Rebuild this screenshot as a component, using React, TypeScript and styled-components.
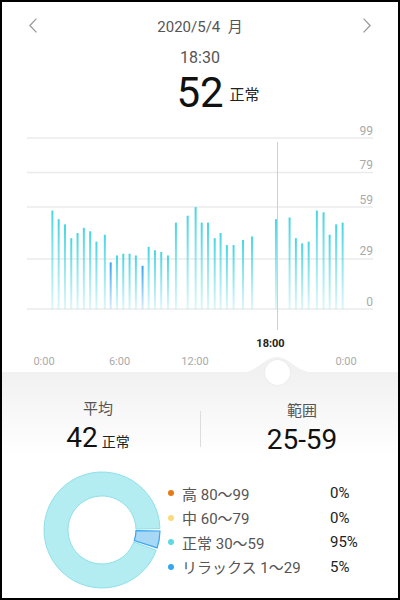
import { Fragment } from "react";
import styled, { createGlobalStyle } from "styled-components";

const GlobalStyle = createGlobalStyle`
  html, body {
    margin: 0;
    padding: 0;
    background: #fff;
  }
  body {
    font-family: Roboto, "Noto Sans CJK JP", sans-serif;
  }
`;

const Screen = styled.div`
  width: 400px;
  height: 600px;
  box-sizing: border-box;
  border: 2px solid #000;
  display: flex;
  flex-direction: column;
  overflow: hidden;
  background: #fff;
`;

const Header = styled.div`
  height: 46px;
  display: flex;
  align-items: center;
  justify-content: space-between;
  padding: 0 27px;
`;

const DateText = styled.div`
  font-size: 15px;
  color: #555;
`;

const NavButton = styled.button`
  border: 0;
  padding: 0;
  background: none;
  display: flex;
  cursor: pointer;
`;

const TimeText = styled.div`
  text-align: center;
  font-size: 16px;
  line-height: 20px;
  color: #555;
`;

const ReadingRow = styled.div`
  margin-top: 3px;
  height: 44px;
  display: grid;
  grid-template-columns: 1fr auto 1fr;
  align-items: baseline;
`;

const BigValue = styled.span`
  font-size: 42px;
  line-height: 44px;
  color: #111;
`;

const Unit = styled.span`
  font-size: 15px;
  line-height: 20px;
  color: #222;
  justify-self: start;
  align-self: center;
  margin: 4px 0 0 6px;
`;

const ChartSvg = styled.svg`
  display: block;
  width: 396px;
  height: 221px;
`;

const AxisRow = styled.div`
  height: 36px;
  display: grid;
  grid-template-columns: repeat(5, 75.5px);
  padding-left: 4.25px;
`;

const AxisLabel = styled.span<{ $active?: boolean }>`
  text-align: center;
  font-size: 11px;
  line-height: 14px;
  color: ${({ $active }) => ($active ? "#222" : "#aaa")};
  font-weight: ${({ $active }) => ($active ? 700 : 400)};
  align-self: ${({ $active }) => ($active ? "start" : "end")};
  padding-top: ${({ $active }) => ($active ? "1px" : "0")};
  margin-bottom: ${({ $active }) => ($active ? "0" : "3px")};
`;

const BottomPanel = styled.div`
  position: relative;
  flex: 1;
  background: linear-gradient(#f1f1f1 0, #fff 85px);
`;

const Bump = styled.svg`
  position: absolute;
  left: 238px;
  top: -16px;
  width: 74px;
  height: 17px;
`;

const Knob = styled.div`
  position: absolute;
  left: 263px;
  top: -12px;
  width: 25px;
  height: 25px;
  border-radius: 50%;
  background: #fff;
  box-shadow: 0 0 2px rgba(0, 0, 0, 0.08);
`;

const StatsRow = styled.div`
  display: grid;
  grid-template-columns: 192px 1fr 192px;
  padding-top: 27px;
  align-items: center;
`;

const StatBlock = styled.div`
  display: flex;
  flex-direction: column;
  align-items: center;
`;

const StatLabel = styled.div`
  font-size: 15px;
  line-height: 20px;
  color: #555;
`;

const StatValue = styled.div`
  margin-top: 3px;
  display: flex;
  align-items: baseline;
  gap: 4px;
  font-size: 28px;
  line-height: 32px;
  color: #111;
`;

const StatUnit = styled.span`
  font-size: 14px;
  color: #222;
`;

const Divider = styled.div`
  justify-self: center;
  width: 1px;
  height: 36px;
  background: #dddddd;
`;

const DonutRow = styled.div`
  margin-top: 12px;
  padding-left: 40px;
  display: flex;
  align-items: center;
`;

const Legend = styled.div`
  margin-left: 6px;
  display: grid;
  grid-template-columns: 6px 140px auto;
  column-gap: 8px;
  grid-auto-rows: 24.5px;
  align-items: center;
`;

const Dot = styled.span<{ $color: string }>`
  width: 6px;
  height: 6px;
  border-radius: 50%;
  background: ${({ $color }) => $color};
`;

const LegendLabel = styled.span`
  font-size: 15px;
  color: #555;
  white-space: nowrap;
`;

const LegendPct = styled.span`
  font-size: 15px;
  color: #222;
`;

// [minutes since 0:00, value]
const readings: [number, number][] = [
  [40, 57], [70, 52], [100, 49], [130, 41], [160, 44], [190, 47], [220, 45],
  [250, 39], [290, 43], [318, 27], [348, 31], [378, 32], [408, 32], [438, 31],
  [470, 25], [499, 36], [529, 34], [559, 33], [591, 31], [629, 50], [685, 54],
  [723, 59], [752, 50], [782, 50], [814, 41], [842, 44], [872, 37], [904, 37],
  [949, 40], [992, 42], [1106, 52], [1171, 53], [1201, 41], [1231, 38],
  [1262, 39], [1301, 57], [1333, 56], [1362, 43], [1393, 49], [1424, 50],
];

const BASE_Y = 194;
const UNIT = 1.727;
const xOf = (min: number) => 42 + (min / 1440) * 302;
const yOf = (v: number) => BASE_Y - v * UNIT;

const gridValues = [99, 79, 59, 29, 0];

const legendItems = [
  { color: "#e87a14", label: "高 80〜99", pct: "0%" },
  { color: "#fdd97c", label: "中 60〜79", pct: "0%" },
  { color: "#5ed8e2", label: "正常 30〜59", pct: "95%" },
  { color: "#35a7f0", label: "リラックス 1〜29", pct: "5%" },
];

function Chevron({ dir }: { dir: "left" | "right" }) {
  const d = dir === "left" ? "M7.4 0.6 L0.9 7.5 L7.4 14.4" : "M0.6 0.6 L7.1 7.5 L0.6 14.4";
  return (
    <svg width="8" height="15" viewBox="0 0 8 15">
      <path d={d} fill="none" stroke="#9a9a9a" strokeWidth="1.3" />
    </svg>
  );
}

function HeartChart() {
  return (
    <ChartSvg viewBox="0 0 396 221">
      <defs>
        <linearGradient id="barCyan" x1="0" y1="0" x2="0" y2="1">
          <stop offset="0" stopColor="#45d6e3" />
          <stop offset="1" stopColor="#45d6e3" stopOpacity="0.18" />
        </linearGradient>
        <linearGradient id="barBlue" x1="0" y1="0" x2="0" y2="1">
          <stop offset="0" stopColor="#33a4f4" />
          <stop offset="1" stopColor="#33a4f4" stopOpacity="0.18" />
        </linearGradient>
      </defs>
      {gridValues.map((v) => (
        <g key={v}>
          <line x1="25" x2="371" y1={yOf(v)} y2={yOf(v)} stroke="#ebebeb" strokeWidth="1.5" />
          <text x="371" y={yOf(v) - 3.5} textAnchor="end" fontSize="12" fill="#aaa" fontFamily="Roboto, sans-serif">
            {v}
          </text>
        </g>
      ))}
      {readings.map(([min, v]) => (
        <rect
          key={min}
          x={xOf(min) - 1}
          y={yOf(v)}
          width="2"
          height={v * UNIT}
          fill={v < 30 ? "url(#barBlue)" : "url(#barCyan)"}
        />
      ))}
      <line x1="275.5" x2="275.5" y1="27" y2="215" stroke="#cfcfcf" strokeWidth="1" />
    </ChartSvg>
  );
}

function polar(cx: number, cy: number, r: number, deg: number) {
  const a = (deg * Math.PI) / 180;
  return [cx + r * Math.cos(a), cy + r * Math.sin(a)];
}

function arc(cx: number, cy: number, r0: number, r1: number, a0: number, a1: number) {
  const large = a1 - a0 > 180 ? 1 : 0;
  const [x0, y0] = polar(cx, cy, r1, a0);
  const [x1, y1] = polar(cx, cy, r1, a1);
  const [x2, y2] = polar(cx, cy, r0, a1);
  const [x3, y3] = polar(cx, cy, r0, a0);
  return `M${x0} ${y0} A${r1} ${r1} 0 ${large} 1 ${x1} ${y1} L${x2} ${y2} A${r0} ${r0} 0 ${large} 0 ${x3} ${y3} Z`;
}

function Donut() {
  return (
    <svg width="120" height="120" viewBox="0 0 120 120">
      <path d={arc(60, 60, 34, 58, 20.5, 358.5)} fill="#b3ecf1" stroke="#8ee0ea" strokeWidth="1" />
      <path d={arc(60, 60, 34, 58, 1, 18)} fill="#a7d9f6" stroke="#3aa6ee" strokeWidth="1.2" />
    </svg>
  );
}

export default function App() {
  return (
    <>
      <GlobalStyle />
      <Screen>
        <Header>
          <NavButton aria-label="前の日">
            <Chevron dir="left" />
          </NavButton>
          <DateText>2020/5/4&nbsp; 月</DateText>
          <NavButton aria-label="次の日">
            <Chevron dir="right" />
          </NavButton>
        </Header>
        <TimeText>18:30</TimeText>
        <ReadingRow>
          <span />
          <BigValue>52</BigValue>
          <Unit>正常</Unit>
        </ReadingRow>
        <HeartChart />
        <AxisRow>
          <AxisLabel>0:00</AxisLabel>
          <AxisLabel>6:00</AxisLabel>
          <AxisLabel>12:00</AxisLabel>
          <AxisLabel $active>18:00</AxisLabel>
          <AxisLabel>0:00</AxisLabel>
        </AxisRow>
        <BottomPanel>
          <Bump viewBox="0 0 74 17">
            <path d="M0 16.5 C18 16.5 24 1 37 1 C50 1 56 16.5 74 16.5 L74 17 L0 17 Z" fill="#f1f1f1" />
          </Bump>
          <Knob />
          <StatsRow>
            <StatBlock>
              <StatLabel>平均</StatLabel>
              <StatValue>
                42<StatUnit>正常</StatUnit>
              </StatValue>
            </StatBlock>
            <Divider />
            <StatBlock>
              <StatLabel>範囲</StatLabel>
              <StatValue>25-59</StatValue>
            </StatBlock>
          </StatsRow>
          <DonutRow>
            <Donut />
            <Legend>
              {legendItems.map((item) => (
                <Fragment key={item.label}>
                  <Dot $color={item.color} />
                  <LegendLabel>{item.label}</LegendLabel>
                  <LegendPct>{item.pct}</LegendPct>
                </Fragment>
              ))}
            </Legend>
          </DonutRow>
        </BottomPanel>
      </Screen>
    </>
  );
}
